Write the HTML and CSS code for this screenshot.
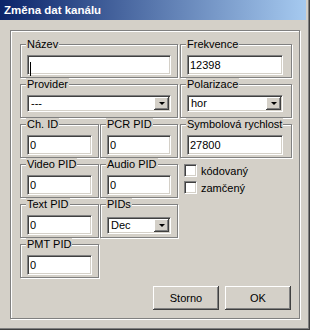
FILE: index.html
```html
<!DOCTYPE html>
<html lang="cs">
<head>
    <meta charset="UTF-8">
    <title>Změna dat kanálu</title>
    <link rel="stylesheet" href="styles.css">
</head>
<body>
    <div class="window">
        <div class="titlebar">Změna dat kanálu</div>
        <div class="panel">
            <div class="fields">
                <div class="group wide">
                    <div class="cap">Název</div>
                    <div class="caret-wrap"><input type="text" class="edit" value=""></div>
                </div>
                <div class="group col-c">
                    <div class="cap">Frekvence</div>
                    <input type="text" class="edit" value="12398">
                </div>

                <div class="group wide">
                    <div class="cap">Provider</div>
                    <div class="combo"><span class="combo-text">---</span><span class="drop"></span></div>
                </div>
                <div class="group col-c">
                    <div class="cap">Polarizace</div>
                    <div class="combo"><span class="combo-text">hor</span><span class="drop"></span></div>
                </div>

                <div class="group col-a">
                    <div class="cap">Ch. ID</div>
                    <input type="text" class="edit" value="0">
                </div>
                <div class="group col-b">
                    <div class="cap">PCR PID</div>
                    <input type="text" class="edit" value="0">
                </div>
                <div class="group col-c">
                    <div class="cap">Symbolová rychlost</div>
                    <input type="text" class="edit" value="27800">
                </div>

                <div class="group col-a">
                    <div class="cap">Video PID</div>
                    <input type="text" class="edit" value="0">
                </div>
                <div class="group col-b">
                    <div class="cap">Audio PID</div>
                    <input type="text" class="edit" value="0">
                </div>
                <div class="checks">
                    <label class="check"><span class="box"></span>kódovaný</label>
                    <label class="check"><span class="box"></span>zamčený</label>
                </div>

                <div class="group col-a">
                    <div class="cap">Text PID</div>
                    <input type="text" class="edit" value="0">
                </div>
                <div class="group col-b">
                    <div class="cap">PIDs</div>
                    <div class="combo low"><span class="combo-text">Dec</span><span class="drop"></span></div>
                </div>

                <div class="group col-a">
                    <div class="cap">PMT PID</div>
                    <input type="text" class="edit" value="0">
                </div>
            </div>
            <div class="buttons">
                <button class="btn">Storno</button>
                <button class="btn">OK</button>
            </div>
        </div>
    </div>
</body>
</html>
```

FILE: styles.css
```css
body {
    margin: 0;
    font-family: "Liberation Sans", Arial, sans-serif;
    font-size: 11px;
    color: #000;
    background-color: #d4d0c8;
}
.window {
    width: 310px;
    height: 330px;
    box-sizing: border-box;
    background-color: #d4d0c8;
    box-shadow: inset -1px -1px 0 #404040, inset -2px -2px 0 #808080;
}
.titlebar {
    width: 306px;
    height: 20px;
    line-height: 20px;
    padding-left: 4px;
    box-sizing: border-box;
    background: linear-gradient(to right, #0a246a, #a6caf0);
    color: white;
    font-weight: bold;
    font-size: 11.5px;
}
.panel {
    width: 290px;
    height: 289px;
    margin: 10px 0 0 10px;
    box-sizing: border-box;
    padding: 7px 8px 8px 9px;
    border: 1px solid #808080;
    box-shadow: inset 1px 1px 0 #fff, 1px 1px 0 #fff;
}
.fields {
    display: grid;
    grid-template-columns: 80px 80px 112px;
    grid-auto-rows: 40px;
    justify-items: start;
}
.group {
    margin-top: 6px;
    height: 34px;
    box-sizing: border-box;
    padding: 0 6px;
    border: 1px solid #808080;
    box-shadow: inset 1px 1px 0 #fff, 1px 1px 0 #fff;
}
.cap {
    display: table;
    margin: -7px 0 0 -1px;
    padding: 0 1px;
    height: 13px;
    line-height: 13px;
    white-space: nowrap;
    background-color: #d4d0c8;
}
.wide {
    grid-column: span 2;
    width: 158px;
}
.col-a {
    grid-column: 1;
    width: 79px;
}
.col-b {
    grid-column: 2;
    width: 78px;
}
.col-c {
    grid-column: 3;
    width: 112px;
    padding-right: 8px;
}
.edit {
    display: block;
    width: 100%;
    height: 20px;
    margin: 4px 0 0 0;
    box-sizing: border-box;
    padding: 0 2px;
    border: 1px solid;
    border-color: #808080 #fff #fff #808080;
    box-shadow: inset 1px 1px 0 #404040, inset -1px -1px 0 #d4d0c8;
    background-color: #fff;
    font-family: inherit;
    font-size: 11px;
    color: #000;
    outline: none;
}
.caret-wrap {
    position: relative;
}
.caret-wrap::after {
    content: "";
    position: absolute;
    left: 3px;
    top: 7px;
    width: 1px;
    height: 14px;
    background-color: #000;
}
.combo {
    display: flex;
    align-items: center;
    height: 17px;
    margin-top: 4px;
    box-sizing: border-box;
    padding: 1px 1px 1px 3px;
    border: 1px solid;
    border-color: #808080 #fff #fff #808080;
    box-shadow: inset 1px 1px 0 #404040, inset -1px -1px 0 #d4d0c8;
    background-color: #fff;
}
.combo.low {
    margin-top: 6px;
}
.combo-text {
    flex: 1;
    line-height: 13px;
}
.drop {
    position: relative;
    width: 15px;
    height: 13px;
    box-sizing: border-box;
    background-color: #d4d0c8;
    box-shadow: inset -1px -1px 0 #404040, inset 1px 1px 0 #fff, inset -2px -2px 0 #808080;
}
.drop::after {
    content: "";
    position: absolute;
    left: 5px;
    top: 5px;
    border-left: 3px solid transparent;
    border-right: 3px solid transparent;
    border-top: 3px solid #000;
}
.checks {
    grid-column: 3;
    grid-row: span 2;
    padding: 6px 0 0 4px;
    display: flex;
    flex-direction: column;
    gap: 4px;
}
.check {
    display: flex;
    align-items: center;
    gap: 4px;
    height: 13px;
}
.box {
    width: 13px;
    height: 13px;
    box-sizing: border-box;
    border: 1px solid;
    border-color: #808080 #fff #fff #808080;
    box-shadow: inset 1px 1px 0 #404040, inset -1px -1px 0 #d4d0c8;
    background-color: #fff;
}
.buttons {
    display: flex;
    justify-content: flex-end;
    gap: 6px;
    margin-top: 8px;
}
.btn {
    width: 66px;
    height: 24px;
    box-sizing: border-box;
    border: none;
    background-color: #d4d0c8;
    box-shadow: inset -1px -1px 0 #404040, inset 1px 1px 0 #fff, inset -2px -2px 0 #808080;
    font-family: inherit;
    font-size: 11px;
    color: #000;
    padding: 0;
}
```
